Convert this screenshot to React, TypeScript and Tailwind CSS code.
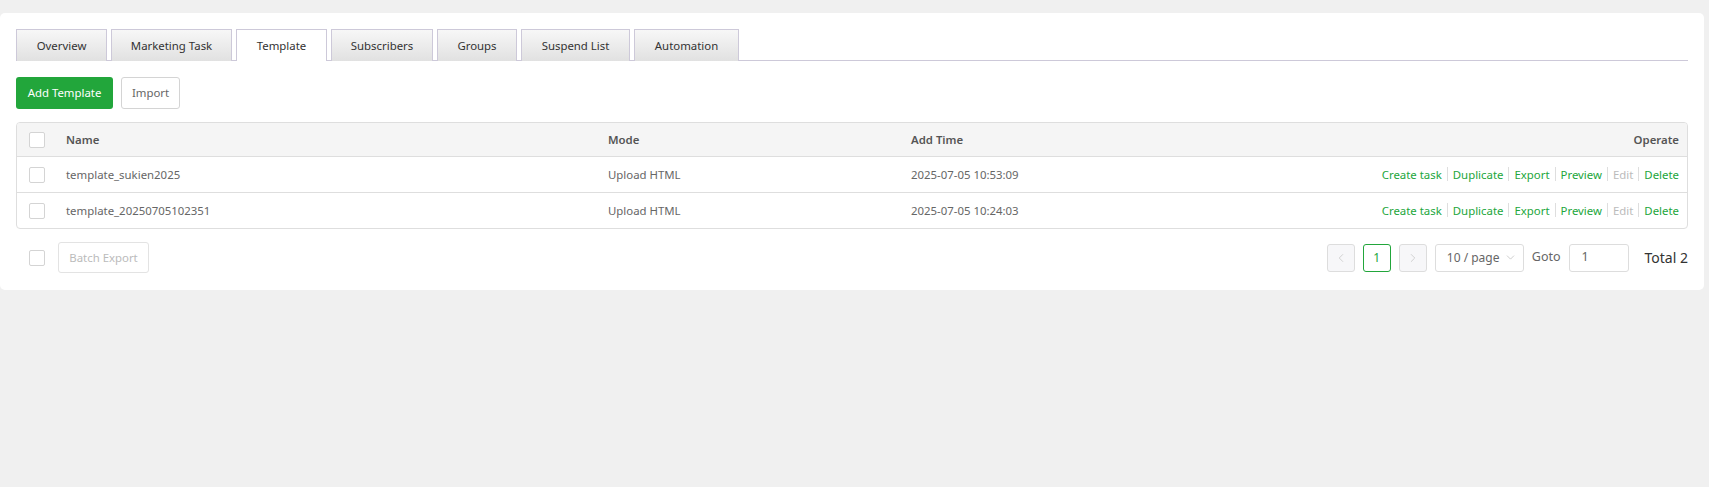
import { ChevronDown, ChevronLeft, ChevronRight } from 'lucide-react'

const tabs = [
  { label: 'Overview', w: 'w-[91px]' },
  { label: 'Marketing Task', w: 'w-[121px]' },
  { label: 'Template', w: 'w-[91px]' },
  { label: 'Subscribers', w: 'w-[102px]' },
  { label: 'Groups', w: 'w-[80px]' },
  { label: 'Suspend List', w: 'w-[109px]' },
  { label: 'Automation', w: 'w-[105px]' },
]

const rows = [
  { name: 'template_sukien2025', mode: 'Upload HTML', time: '2025-07-05 10:53:09' },
  { name: 'template_20250705102351', mode: 'Upload HTML', time: '2025-07-05 10:24:03' },
]

const actions = ['Create task', 'Duplicate', 'Export', 'Preview', 'Edit', 'Delete']

function Checkbox() {
  return <span className="block h-[16px] w-[16px] rounded-[2px] border border-[#d4d4d4] bg-white" />
}

export default function App() {
  return (
    <div className="h-screen w-full bg-[#f0f0f0] pr-[5px] pt-[13px] font-['Noto_Sans',sans-serif] text-[11.4px] text-[#666]">
      <div className="rounded-[5px] bg-white px-4 pb-[17px] pt-4">
        <nav className="flex gap-[4px] border-b border-[#cdc9d9]">
          {tabs.map((tab) => (
            <div
              key={tab.label}
              className={`${tab.w} -mb-px flex h-[32px] items-center justify-center border border-b-0 border-[#cdc9d9] pt-px text-[#333] ${
                tab.label === 'Template'
                  ? 'bg-white'
                  : 'bg-gradient-to-b from-[#f7f7f7] to-[#e1e1e1]'
              }`}
            >
              {tab.label}
            </div>
          ))}
        </nav>

        <div className="mt-4 flex gap-2">
          <button className="h-[32px] w-[97px] rounded-[3px] bg-[#22a63b] text-white">Add Template</button>
          <button className="h-[32px] w-[59px] rounded-[3px] border border-[#d4d4d4] bg-white text-[#666]">
            Import
          </button>
        </div>

        <div className="mt-[13px] overflow-hidden rounded-[4px] border border-[#dedede]">
          <div className="grid h-[33px] grid-cols-[49px_542px_303px_1fr] items-center bg-[#f5f5f5] font-semibold text-[#555]">
            <div className="pl-[12px]">
              <Checkbox />
            </div>
            <div>Name</div>
            <div>Mode</div>
            <div className="flex justify-between pr-[8px]">
              <span>Add Time</span>
              <span>Operate</span>
            </div>
          </div>
          {rows.map((row) => (
            <div
              key={row.name}
              className="grid h-[36px] grid-cols-[49px_542px_303px_1fr] items-center border-t border-[#dedede]"
            >
              <div className="pl-[12px]">
                <Checkbox />
              </div>
              <div>{row.name}</div>
              <div>{row.mode}</div>
              <div className="flex justify-between pr-[8px]">
                <span>{row.time}</span>
                <span className="flex items-center">
                  {actions.map((action, index) => (
                    <span key={action} className="flex items-center">
                      {index > 0 && <span className="mx-[5px] h-[14px] w-px bg-[#dedede]" />}
                      <span className={action === 'Edit' ? 'text-[#bbb]' : 'text-[#22a63b]'}>{action}</span>
                    </span>
                  ))}
                </span>
              </div>
            </div>
          ))}
        </div>

        <div className="mt-[13px] flex items-center justify-between">
          <div className="flex items-center gap-[13px] pl-[13px]">
            <Checkbox />
            <button className="h-[31px] w-[91px] rounded-[3px] border border-[#e3e3e3] bg-white text-[#bbb]">
              Batch Export
            </button>
          </div>

          <div className="flex items-center text-[12.5px]">
            <span className="flex h-[28px] w-[28px] items-center justify-center rounded-[3px] border border-[#ddd] bg-[#f7f7f9] text-[#ccc]">
              <ChevronLeft size={14} strokeWidth={1.5} />
            </span>
            <span className="ml-2 flex h-[28px] w-[28px] items-center justify-center rounded-[3px] border border-[#22a63b] text-[12px] text-[#22a63b]">
              1
            </span>
            <span className="ml-2 flex h-[28px] w-[28px] items-center justify-center rounded-[3px] border border-[#ddd] bg-[#f7f7f9] text-[#ccc]">
              <ChevronRight size={14} strokeWidth={1.5} />
            </span>
            <span className="ml-2 flex h-[28px] w-[89px] items-center gap-[4px] rounded-[3px] border border-[#ddd] pl-[11px] text-[12px] text-[#666]">
              10 / page
              <ChevronDown size={13} strokeWidth={1.3} className="text-[#bbb]" />
            </span>
            <span className="ml-2 text-[#666]">Goto</span>
            <span className="ml-2 flex h-[28px] w-[60px] items-center rounded-[3px] border border-[#ddd] pl-[12px] text-[#666]">
              1
            </span>
            <span className="ml-4 text-[14px] text-[#333]">Total 2</span>
          </div>
        </div>
      </div>
    </div>
  )
}
